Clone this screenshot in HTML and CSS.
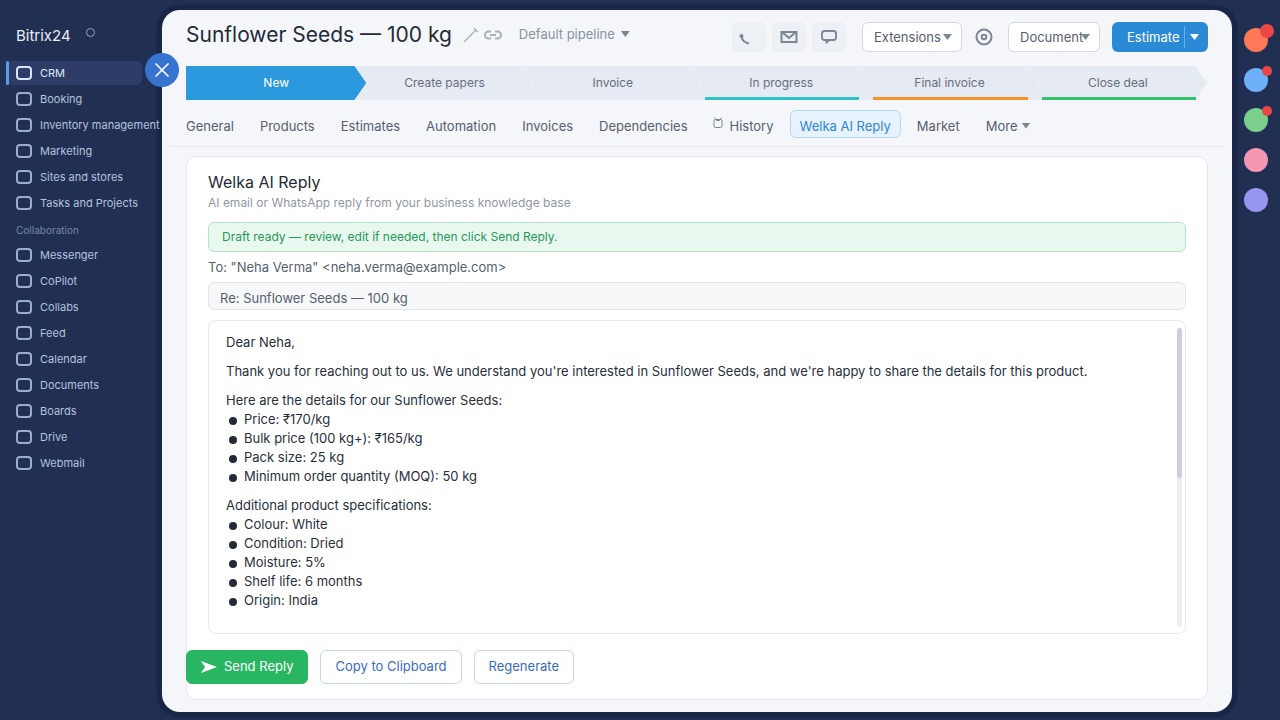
FILE: index.html
```html
<!DOCTYPE html>
<html lang="en">
<head>
<meta charset="utf-8">
<meta name="viewport" content="width=device-width, initial-scale=1">
<title>Sunflower Seeds — 100 kg</title>
<link rel="stylesheet" href="styles.css">
</head>
<body>
<div class="app">
  <nav class="sidebar" aria-label="Main menu">
    <div class="brand">Bitrix24 <span class="brand-ring"></span></div>
    <a class="nav-item active" href="#"><span class="nav-icon"></span>CRM</a>
    <a class="nav-item" href="#"><span class="nav-icon"></span>Booking</a>
    <a class="nav-item" href="#"><span class="nav-icon"></span>Inventory management</a>
    <a class="nav-item" href="#"><span class="nav-icon"></span>Marketing</a>
    <a class="nav-item" href="#"><span class="nav-icon"></span>Sites and stores</a>
    <a class="nav-item" href="#"><span class="nav-icon"></span>Tasks and Projects</a>
    <div class="nav-label">Collaboration</div>
    <a class="nav-item" href="#"><span class="nav-icon"></span>Messenger</a>
    <a class="nav-item" href="#"><span class="nav-icon"></span>CoPilot</a>
    <a class="nav-item" href="#"><span class="nav-icon"></span>Collabs</a>
    <a class="nav-item" href="#"><span class="nav-icon"></span>Feed</a>
    <a class="nav-item" href="#"><span class="nav-icon"></span>Calendar</a>
    <a class="nav-item" href="#"><span class="nav-icon"></span>Documents</a>
    <a class="nav-item" href="#"><span class="nav-icon"></span>Boards</a>
    <a class="nav-item" href="#"><span class="nav-icon"></span>Drive</a>
    <a class="nav-item" href="#"><span class="nav-icon"></span>Webmail</a>
  </nav>

  <main class="panel">
    <button class="close" aria-label="Close">
      <svg width="14" height="14" viewBox="0 0 14 14" fill="none" stroke="#fff" stroke-width="1.7" stroke-linecap="round"><path d="M1 1l12 12M13 1L1 13"/></svg>
    </button>

    <header class="header">
      <div class="heading">
        <h1 class="title">Sunflower Seeds — 100 kg</h1>
        <svg class="edit-icon" width="16" height="16" viewBox="0 0 16 16" fill="none" stroke="#b0b6c1" stroke-width="1.5"><path d="M1 15L13 3M11 1l4 4"/></svg>
        <svg class="link-icon" width="18" height="10" viewBox="0 0 18 10" fill="none" stroke="#a9b1bd" stroke-width="2"><path d="M7 1.500H4.500a3.500 3.500 0 0 0 0 7H7M11 1.500h2.500a3.500 3.500 0 0 1 0 7H11M6 5h6"/></svg>
        <button class="pipeline">Default pipeline <span class="caret"></span></button>
      </div>
      <div class="icon-group">
        <button class="icon-button" aria-label="Call">
          <svg width="24" height="20" viewBox="0 0 24 20"><circle cx="4.500" cy="9" r="2" fill="#7d8693"/><path d="M4.500 10q1.500 5.500 7.500 6.500" fill="none" stroke="#7d8693" stroke-width="2"/></svg>
        </button>
        <button class="icon-button" aria-label="Email">
          <svg width="18" height="14" viewBox="0 0 18 14" fill="none" stroke="#7d8693" stroke-width="2"><path d="M1.500 2h15v10h-15zM2 2l7 6 7-6"/></svg>
        </button>
        <button class="icon-button" aria-label="Chat">
          <svg width="18" height="16" viewBox="0 0 18 16"><rect x="2" y="2" width="14" height="9" rx="2.500" fill="none" stroke="#7d8693" stroke-width="1.900"/><path d="M5 11h6l-5 4z" fill="#7d8693"/></svg>
        </button>
      </div>
      <button class="select-button">Extensions<span class="caret"></span></button>
      <button class="target" aria-label="Settings">
        <svg width="18" height="18" viewBox="0 0 18 18" fill="none" stroke="#7d8693" stroke-width="2"><circle cx="9" cy="9" r="7.500"/><circle cx="9" cy="9" r="2.300"/></svg>
      </button>
      <button class="select-button document">Document<span class="caret"></span></button>
      <button class="estimate">Estimate<span class="estimate-line"></span><span class="caret white"></span></button>
    </header>

    <ol class="stages">
      <li class="stage current"><span>New</span></li>
      <li class="stage"><span>Create papers</span></li>
      <li class="stage"><span>Invoice</span></li>
      <li class="stage bar teal"><span>In progress</span></li>
      <li class="stage bar orange"><span>Final invoice</span></li>
      <li class="stage bar green"><span>Close deal</span></li>
    </ol>

    <nav class="tabs" aria-label="Deal sections">
      <a class="tab" href="#">General</a>
      <a class="tab" href="#">Products</a>
      <a class="tab" href="#">Estimates</a>
      <a class="tab" href="#">Automation</a>
      <a class="tab" href="#">Invoices</a>
      <a class="tab" href="#">Dependencies</a>
      <a class="tab history" href="#"><svg class="history-icon" width="10" height="12" viewBox="0 0 10 12" fill="none" stroke="#7d8693" stroke-width="1"><rect x="1" y="2.500" width="8" height="8" rx="1.500"/><path d="M1.500 .5l2 3h3l2-3"/></svg>History</a>
      <a class="tab selected" href="#">Welka AI Reply</a>
      <a class="tab" href="#">Market</a>
      <a class="tab" href="#">More<span class="caret more"></span></a>
    </nav>

    <section class="card">
      <h2 class="card-title">Welka AI Reply</h2>
      <p class="card-sub">AI email or WhatsApp reply from your business knowledge base</p>
      <div class="alert" role="status">Draft ready — review, edit if needed, then click Send Reply.</div>
      <p class="recipient">To: "Neha Verma" &lt;neha.verma@example.com&gt;</p>
      <input class="subject" type="text" aria-label="Subject" value="Re: Sunflower Seeds — 100 kg">
      <div class="editor">
        <div class="message" contenteditable="true" role="textbox" aria-multiline="true" aria-label="Message" spellcheck="false">
          <p>Dear Neha,</p>
          <p>Thank you for reaching out to us. We understand you're interested in Sunflower Seeds, and we're happy to share the details for this product.</p>
          <p>Here are the details for our Sunflower Seeds:</p>
          <ul>
            <li>Price: ₹170/kg</li>
            <li>Bulk price (100 kg+): ₹165/kg</li>
            <li>Pack size: 25 kg</li>
            <li>Minimum order quantity (MOQ): 50 kg</li>
          </ul>
          <p>Additional product specifications:</p>
          <ul>
            <li>Colour: White</li>
            <li>Condition: Dried</li>
            <li>Moisture: 5%</li>
            <li>Shelf life: 6 months</li>
            <li>Origin: India</li>
          </ul>
        </div>
        <div class="scroll-track"><div class="scroll-thumb"></div></div>
      </div>
      <div class="actions">
        <button class="action send"><svg width="16" height="14" viewBox="0 0 16 14" fill="#fff"><path d="M0 1l16 6-16 6 4-6z"/></svg>Send Reply</button>
        <button class="action">Copy to Clipboard</button>
        <button class="action">Regenerate</button>
      </div>
    </section>
  </main>

  <aside class="rail" aria-label="Contacts">
    <span class="avatar coral"><i class="badge large"></i></span>
    <span class="avatar blue"><i class="badge"></i></span>
    <span class="avatar mint"><i class="badge"></i></span>
    <span class="avatar pink"></span>
    <span class="avatar violet"></span>
  </aside>
</div>
</body>
</html>
```

FILE: styles.css
```css
* { box-sizing: border-box; }

body {
  margin: 0;
  background: #212f52;
  font-family: Inter, "Liberation Sans", sans-serif;
  font-size: 13px;
  color: #56606f;
}

button, input { font: inherit; color: inherit; }
button { margin: 0; padding: 0; border: 0; background: none; }
a { color: inherit; text-decoration: none; }
h1, h2, p, ul, ol { margin: 0; padding: 0; font-weight: 400; list-style: none; }
svg { display: block; flex: none; }

.app {
  display: grid;
  grid-template-columns: 162px minmax(0, 1fr) 48px;
  min-height: 100vh;
}

/* Sidebar */
.sidebar {
  position: relative;
  z-index: 1;
  padding: 24px 0 24px 6px;
  font-size: 11px;
  color: #b4c2df;
}
.brand {
  display: flex;
  gap: 15px;
  height: 36px;
  padding-left: 10px;
  font-size: 15px;
  line-height: 24px;
  color: #e9eefa;
}
.brand-ring {
  width: 9px;
  height: 9px;
  margin-top: 4px;
  border: 1px solid #94a3c6;
  border-radius: 50%;
}
.nav-item {
  position: relative;
  display: flex;
  align-items: center;
  gap: 8px;
  width: 136px;
  height: 24px;
  margin: 1px 0 2px;
  padding-left: 10px;
  white-space: nowrap;
}
.nav-item.active {
  border-radius: 6px;
  background: #2d3d67;
  color: #e1e8f6;
}
.nav-item.active::before {
  content: "";
  position: absolute;
  left: 0;
  width: 3px;
  height: 24px;
  border-radius: 2px;
  background: #5c9af0;
}
.nav-icon {
  flex: none;
  width: 16px;
  height: 14px;
  border: 2px solid #9bacd0;
  border-radius: 4px;
}
.active .nav-icon { border-color: #dce5f8; }
.nav-label {
  height: 25px;
  padding-left: 10px;
  font-size: 10px;
  line-height: 26px;
  color: #7586ad;
}

/* Main panel */
.panel {
  position: relative;
  display: flex;
  flex-direction: column;
  margin: 10px 0 8px;
  padding: 12px 8px 12px;
  border-radius: 18px;
  background: #f4f6fa;
  box-shadow: 0 0 0 2px #1b2849, 0 0 0 3px #172341, 0 0 0 4px #1c294b, 0 0 0 5px #192545, 0 0 0 6px #1d2b4d;
}
.close {
  position: absolute;
  z-index: 2;
  top: 43px;
  left: -17px;
  display: grid;
  place-items: center;
  width: 34px;
  height: 34px;
  border-radius: 50%;
  background: #3674d0;
}

.header {
  display: flex;
  align-items: center;
  height: 30px;
  padding: 0 16px;
}
.heading {
  display: flex;
  flex: 1;
  align-items: center;
  align-self: flex-start;
  height: 26px;
  white-space: nowrap;
}
.title {
  font-size: 21px;
  line-height: 26px;
  color: #242b38;
}
.edit-icon { margin-left: 11px; }
.link-icon { margin-left: 5px; }
.pipeline {
  display: flex;
  align-items: center;
  gap: 6px;
  height: 24px;
  margin-left: 17px;
  align-self: flex-start;
  color: #8a929f;
}
.caret {
  flex: none;
  width: 9px;
  height: 6px;
  background: #7d8693;
  clip-path: polygon(0 0, 100% 0, 50% 100%);
}
.caret.white { background: #fff; }
.icon-group {
  display: flex;
  gap: 6px;
  margin-right: 16px;
}
.icon-button {
  display: grid;
  place-items: center;
  width: 34px;
  height: 30px;
  border-radius: 6px;
  background: #edf1f5;
}
.select-button {
  position: relative;
  display: flex;
  align-items: center;
  width: 100px;
  height: 30px;
  padding-left: 11px;
  border: 1px solid #d4dae4;
  border-radius: 6px;
  background: #fff;
}
.select-button .caret {
  position: absolute;
  right: 9px;
}
.select-button.document { width: 92px; }
.target { margin: 0 15px 0 13px; }
.estimate {
  display: flex;
  align-items: center;
  height: 30px;
  width: 96px;
  margin-left: 12px;
  padding: 0 9px 0 15px;
  border-radius: 6px;
  background: #2b8ad6;
  color: #fff;
}
.estimate-line {
  width: 1px;
  height: 22px;
  margin: 0 5px 0 auto;
  background: #6cb0e5;
}

/* Pipeline stages */
.stages {
  display: grid;
  grid-template-columns: repeat(6, 1fr);
  margin: 14px 28px 0 16px;
}
.stage {
  position: relative;
  display: grid;
  place-items: center;
  height: 34px;
  margin-right: -12px;
  padding-bottom: 2px;
  background: #f0f2f6;
  clip-path: polygon(0 0, calc(100% - 12px) 0, 100% 50%, calc(100% - 12px) 100%, 0 100%);
  font-size: 12px;
  color: #656f7e;
}
.stage::before {
  content: "";
  position: absolute;
  inset: 0 1px 0 0;
  background: #e6eaf2;
  clip-path: polygon(0 0, calc(100% - 12px) 0, 100% 50%, calc(100% - 12px) 100%, 0 100%);
}
.stage span { position: relative; }
.stage:nth-child(1) { z-index: 6; }
.stage:nth-child(2) { z-index: 5; }
.stage:nth-child(3) { z-index: 4; }
.stage:nth-child(4) { z-index: 3; }
.stage:nth-child(5) { z-index: 2; }
.stage.current { background: #2c99de; color: #fff; }
.stage.current::before { background: #2c99de; }
.stage.bar::after {
  content: "";
  position: absolute;
  right: 12px;
  bottom: 0;
  left: 14px;
  height: 3px;
}
.stage.teal::after { background: #2bc3c6; }
.stage.orange::after { background: #f39429; }
.stage.green::after { background: #31c16a; }

/* Section tabs */
.tabs {
  display: flex;
  gap: 6px;
  padding: 10px 6px 8px;
  border-bottom: 1px solid #e7eaf0;
  white-space: nowrap;
}
.tab {
  display: flex;
  align-items: center;
  height: 28px;
  padding: 3px 9px 0;
  border: 1px solid transparent;
  border-radius: 6px;
}
.tab.history { padding-left: 8px; }
.tab.selected {
  border-color: #b4d6f8;
  background: #e6f2fe;
  color: #2d86dc;
}
.history-icon { margin: 0 7px 6px 0; }
.caret.more { margin-left: 4px; }

/* Reply card */
.card {
  display: flex;
  flex: 1;
  flex-direction: column;
  margin: 9px 16px 0;
  padding: 14px 21px 15px;
  border: 1px solid #e4e8ee;
  border-radius: 10px;
  background: #fff;
}
.card-title {
  font-size: 16px;
  line-height: 22px;
  color: #242b38;
}
.card-sub {
  margin: 1px 0 10px;
  font-size: 12px;
  line-height: 18px;
  color: #8f97a3;
}
.alert {
  padding: 0 13px;
  border: 1px solid #b2e4c6;
  border-radius: 6px;
  background: #e8f8ee;
  font-size: 12px;
  line-height: 28px;
  color: #27995a;
}
.recipient {
  padding-top: 1px;
  line-height: 29px;
}
.subject {
  width: 100%;
  height: 28px;
  padding: 3px 11px 0;
  border: 1px solid #e2e6ec;
  border-radius: 6px;
  background: #f6f8fa;
}
.editor {
  position: relative;
  flex: 1;
  margin: 10px 0 16px;
  padding: 12px 30px 23px 17px;
  border: 1px solid #e6e9ee;
  border-radius: 8px;
  line-height: 19px;
  color: #282f3c;
}
.message { outline: none; }
.message p + p, .message ul + p { margin-top: 10px; }
.message li {
  position: relative;
  padding-left: 18px;
}
.message li::before {
  content: "";
  position: absolute;
  top: 7px;
  left: 3px;
  width: 8px;
  height: 8px;
  border-radius: 50%;
  background: #242b38;
}
.scroll-track {
  position: absolute;
  top: 7px;
  right: 3px;
  bottom: 6px;
  width: 5px;
  border-radius: 3px;
  background: #eceef2;
}
.scroll-thumb {
  height: 50%;
  border-radius: 3px;
  background: #ccd1d9;
}
.actions {
  display: flex;
  gap: 12px;
  margin-left: -22px;
}
.action {
  display: flex;
  align-items: center;
  gap: 7px;
  height: 34px;
  padding: 0 14px 2px;
  border: 1px solid #c6d5ee;
  border-radius: 6px;
  background: #fff;
  color: #396bc0;
}
.action.send {
  border-color: #29b662;
  background: #29b662;
  color: #fff;
}
.action svg { margin-top: 2px; }

/* Contact rail */
.rail {
  display: flex;
  flex-direction: column;
  align-items: center;
  gap: 16px;
  padding-top: 28px;
}
.avatar {
  position: relative;
  width: 24px;
  height: 24px;
  border-radius: 50%;
}
.badge {
  position: absolute;
  top: -2px;
  right: -4px;
  width: 10px;
  height: 10px;
  border-radius: 50%;
  background: #ec4646;
}
.badge.large {
  top: -4px;
  right: -6px;
  width: 14px;
  height: 14px;
}
.coral { background: #ff7858; }
.blue { background: #6db1fa; }
.mint { background: #7bcf8d; }
.pink { background: #f596b2; }
.violet { background: #9895f0; }
```
